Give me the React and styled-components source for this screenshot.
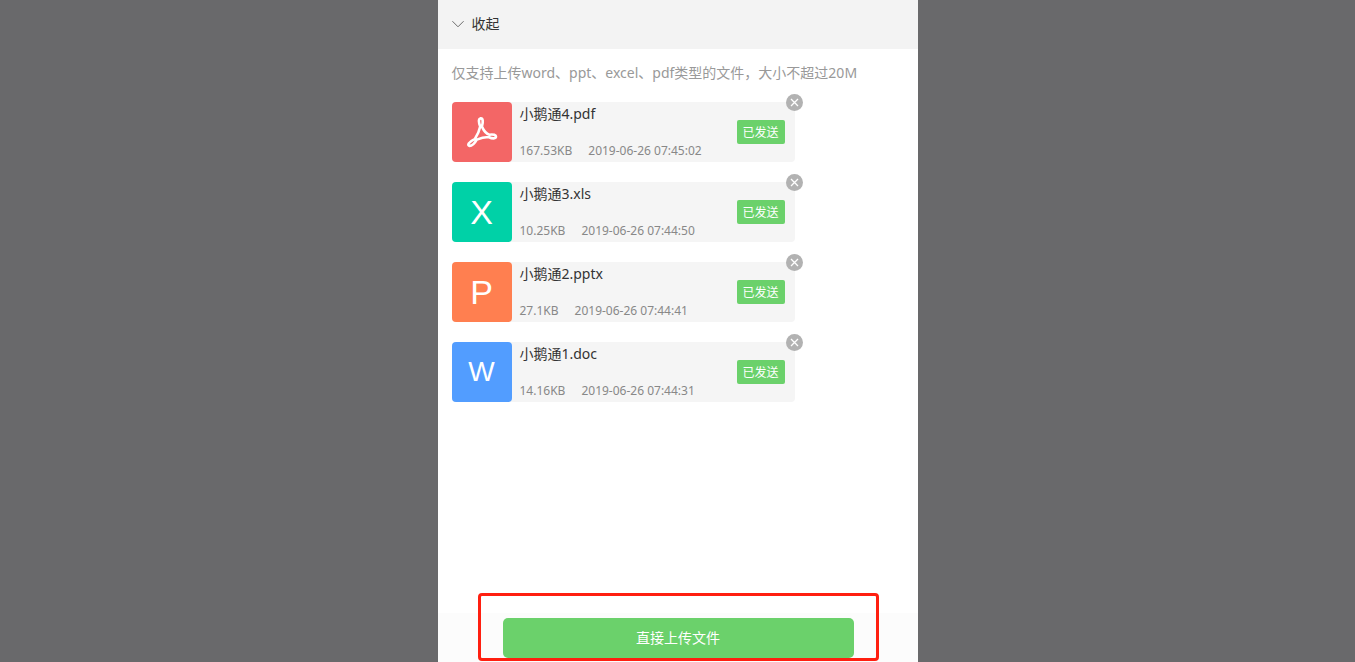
import React from "react";
import styled, { createGlobalStyle } from "styled-components";

const files = [
  { type: "pdf", name: "小鹅通4.pdf", size: "167.53KB", time: "2019-06-26 07:45:02", color: "#f36666" },
  { type: "xls", name: "小鹅通3.xls", size: "10.25KB", time: "2019-06-26 07:44:50", color: "#00d1a7", letter: "X", letterSize: "34px" },
  { type: "ppt", name: "小鹅通2.pptx", size: "27.1KB", time: "2019-06-26 07:44:41", color: "#ff7f50", letter: "P", letterSize: "34px" },
  { type: "doc", name: "小鹅通1.doc", size: "14.16KB", time: "2019-06-26 07:44:31", color: "#529dff", letter: "W", letterSize: "28px" },
];

const PdfIcon = () => (
  <svg width="32" height="32" viewBox="0 0 32 32" fill="none" stroke="#ffffff" strokeWidth="2.6" strokeLinejoin="round" aria-hidden="true">
    <path d="M14.4 2.4c2.6-.4 3 3 1.500 8.200 2.200 4.700 4.600 7.300 7.500 8.100 4.400-.5 6.600.3 6.600 1.900 0 2.400-3.700 2.200-7.400.4-4.500.1-8.200 1-11.800 2.600-2.200 3.900-5 6.300-7.200 6.300-2.600-.6-1.500-3.700 5.400-7.100 3-4.500 4.400-8.200 5.200-12.200-1.600-4.300-1.900-7.700.2-8.200z" />
  </svg>
);

const FileRow = ({ file }) => (
  <Row>
    <TypeIcon color={file.color} $size={file.letterSize}>
      {file.type === "pdf" ? <PdfIcon /> : file.letter}
    </TypeIcon>
    <Info>
      <FileName>{file.name}</FileName>
      <Meta>
        <span>{file.size}</span>
        <span>{file.time}</span>
      </Meta>
    </Info>
    <SentButton type="button">已发送</SentButton>
    <RemoveButton type="button" aria-label={`删除 ${file.name}`}>
      <svg width="17" height="17" viewBox="0 0 17 17" stroke="#ffffff" strokeWidth="1.3" aria-hidden="true">
        <path d="M5 5l7 7M12 5l-7 7" />
      </svg>
    </RemoveButton>
  </Row>
);

export default function App() {
  return (
    <>
      <GlobalStyle />
      <Panel>
        <Header>
          <CollapseButton type="button">
            <svg width="12" height="8" viewBox="0 0 12 8" fill="none" stroke="#6b6b6b" aria-hidden="true">
              <path d="M.4 1.200L6 6.800l5.600-5.600" />
            </svg>
            收起
          </CollapseButton>
        </Header>
        <Content>
          <Tip>仅支持上传word、ppt、excel、pdf类型的文件，大小不超过20M</Tip>
          <FileList>
            {files.map((file) => (
              <FileRow key={file.name} file={file} />
            ))}
          </FileList>
        </Content>
        <Footer>
          <UploadButton type="button">直接上传文件</UploadButton>
          <Highlight />
        </Footer>
      </Panel>
    </>
  );
}

const GlobalStyle = createGlobalStyle`
  * {
    box-sizing: border-box;
  }
  body {
    margin: 0;
    background-color: #69696b;
    font-family: "Noto Sans", "Noto Sans CJK SC", sans-serif;
    font-size: 14px;
    color: #333333;
  }
  button {
    border: none;
    padding: 0;
    font: inherit;
    cursor: pointer;
  }
`;
const Panel = styled.main`
  display: flex;
  flex-direction: column;
  max-width: 480px;
  min-height: 100vh;
  margin: 0 auto;
  background-color: #ffffff;
`;
const Header = styled.header`
  padding: 14px 14px 15px;
  background-color: #f3f3f3;
`;
const CollapseButton = styled.button`
  display: flex;
  align-items: center;
  gap: 8px;
  height: 20px;
  background: none;
  line-height: 20px;
  color: #333333;
`;
const Content = styled.section`
  flex: 1;
  padding: 14px;
`;
const Tip = styled.p`
  margin: 0 0 19px;
  line-height: 20px;
  color: #999999;
`;
const FileList = styled.ul`
  display: flex;
  flex-direction: column;
  gap: 20px;
  max-width: 343px;
  margin: 0;
  padding: 0;
  list-style: none;
`;
const Row = styled.li`
  position: relative;
  display: flex;
  align-items: center;
  padding-right: 10px;
  border-radius: 4px;
  background-color: #f5f5f5;
`;
const TypeIcon = styled.div`
  display: flex;
  align-items: center;
  justify-content: center;
  width: 60px;
  height: 60px;
  border-radius: 4px;
  background-color: ${(props) => props.color};
  color: #ffffff;
  font-family: "Liberation Sans", sans-serif;
  font-size: ${(props) => props.$size};
`;
const Info = styled.div`
  display: flex;
  flex: 1;
  flex-direction: column;
  justify-content: space-between;
  align-self: stretch;
  padding: 2px 8px;
`;
const FileName = styled.div`
  line-height: 20px;
`;
const Meta = styled.div`
  display: flex;
  gap: 16px;
  font-size: 12px;
  line-height: 18px;
  color: #888888;
`;
const SentButton = styled.button`
  width: 48px;
  height: 24px;
  border-radius: 2px;
  background-color: #6bd16b;
  color: #ffffff;
  && {
    font-size: 12px;
  }
`;
const RemoveButton = styled.button`
  position: absolute;
  top: -8px;
  right: -8px;
  display: flex;
  border-radius: 50%;
  background-color: #b2b2b2;
`;
const Footer = styled.footer`
  position: relative;
  padding: 5px 64px 4px 65px;
  background-color: #fcfcfc;
`;
const UploadButton = styled.button`
  width: 100%;
  height: 40px;
  padding-bottom: 2px;
  border-radius: 5px;
  background-color: #6bd16b;
  color: #ffffff;
`;
const Highlight = styled.div`
  position: absolute;
  top: -20px;
  right: 39px;
  bottom: 1px;
  left: 40px;
  border: 3px solid #ff1f10;
  border-radius: 4px;
  pointer-events: none;
`;
